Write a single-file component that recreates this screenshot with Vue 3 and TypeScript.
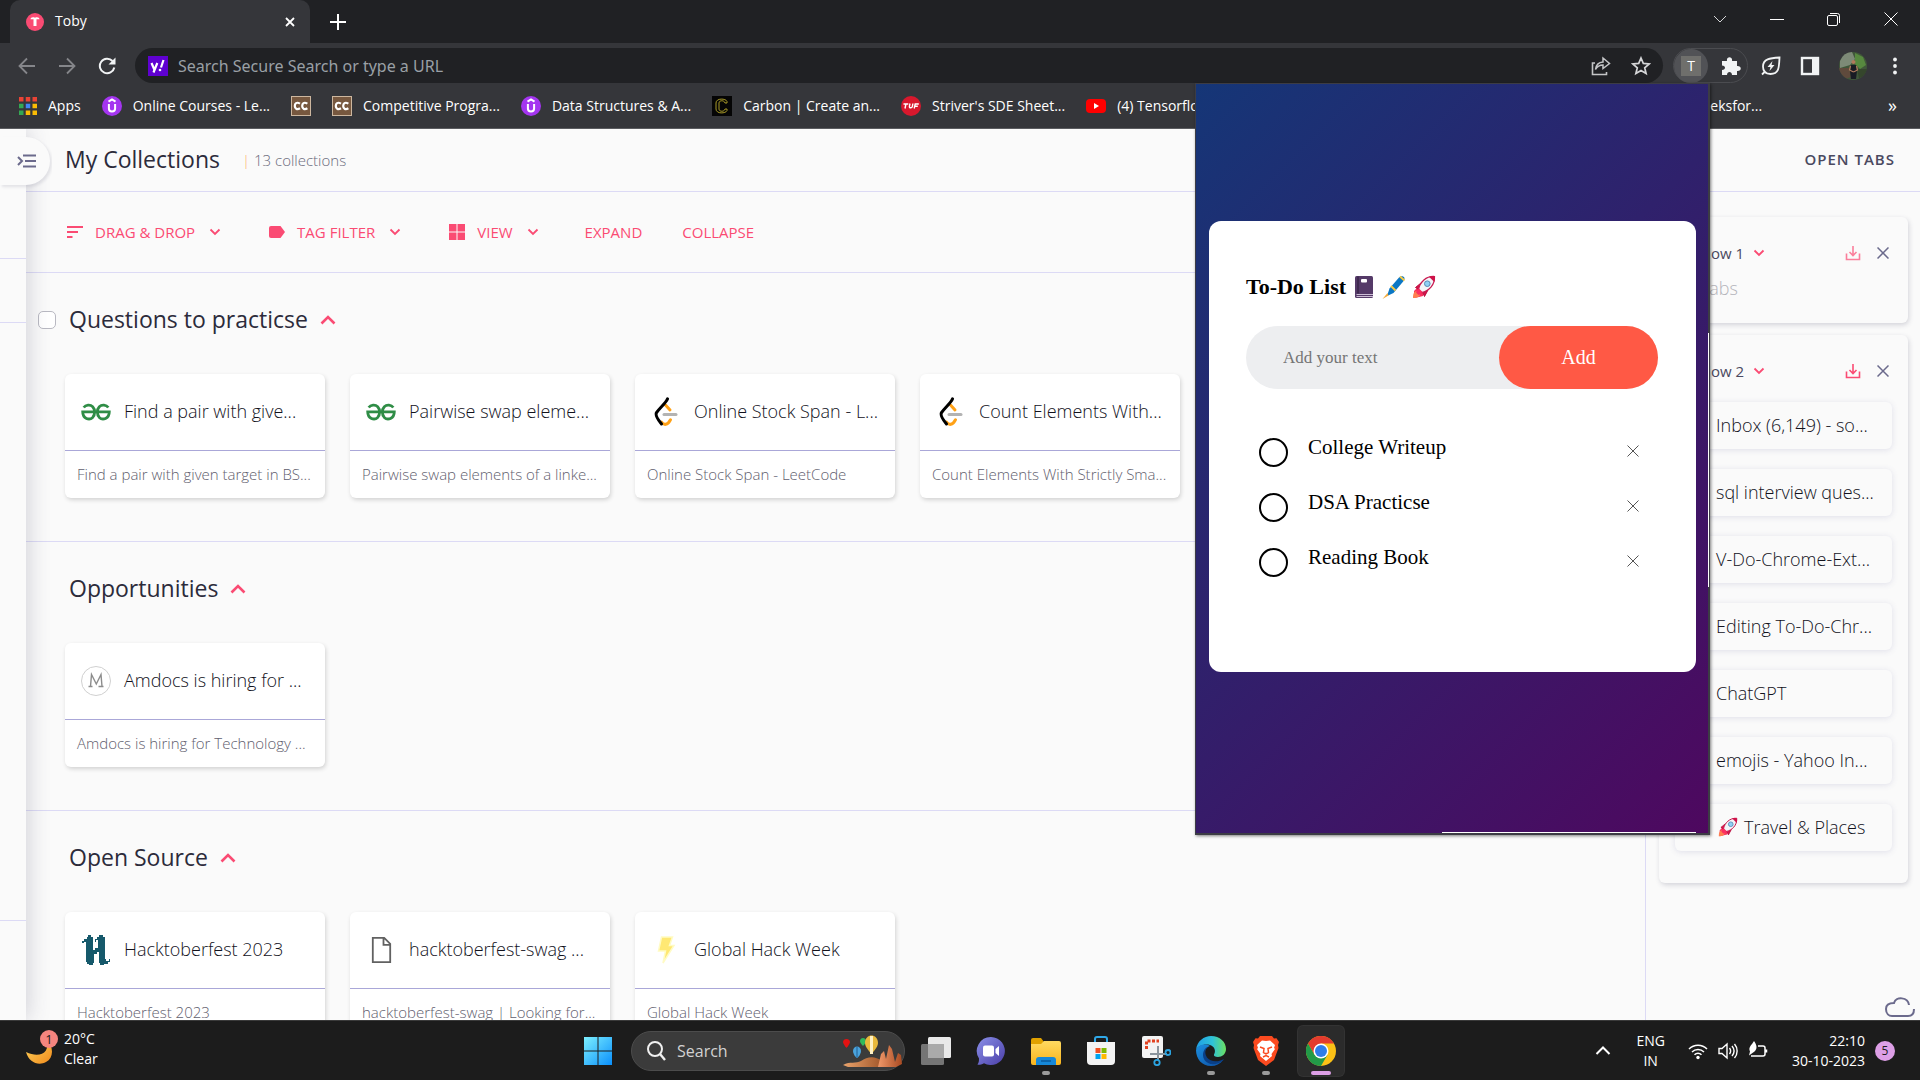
<script setup lang="ts">
import { ref } from 'vue'

interface Bookmark { icon: string; label: string }
interface Card { icon: string; title: string; note: string }
interface Collection { name: string; selectable: boolean; cards: Card[] }
interface Todo { text: string; done: boolean }

const bookmarks: Bookmark[] = [
  { icon: 'i-apps', label: 'Apps' },
  { icon: 'i-udemy', label: 'Online Courses - Le...' },
  { icon: 'i-cc', label: '' },
  { icon: 'i-cc', label: 'Competitive Progra...' },
  { icon: 'i-udemy', label: 'Data Structures & A...' },
  { icon: 'i-carbon', label: 'Carbon | Create an...' },
  { icon: 'i-tuf', label: "Striver's SDE Sheet..." },
  { icon: 'i-youtube', label: '(4) Tensorflow' },
]

const collections: Collection[] = [
  {
    name: 'Questions to practicse',
    selectable: true,
    cards: [
      { icon: 'i-gfg', title: 'Find a pair with give...', note: 'Find a pair with given target in BS...' },
      { icon: 'i-gfg', title: 'Pairwise swap eleme...', note: 'Pairwise swap elements of a linke...' },
      { icon: 'i-leetcode', title: 'Online Stock Span - L...', note: 'Online Stock Span - LeetCode' },
      { icon: 'i-leetcode', title: 'Count Elements With...', note: 'Count Elements With Strictly Sma...' },
    ],
  },
  {
    name: 'Opportunities',
    selectable: false,
    cards: [{ icon: 'i-medium', title: 'Amdocs is hiring for ...', note: 'Amdocs is hiring for Technology ...' }],
  },
  {
    name: 'Open Source',
    selectable: false,
    cards: [
      { icon: 'i-hack', title: 'Hacktoberfest 2023', note: 'Hacktoberfest 2023' },
      { icon: 'i-file', title: 'hacktoberfest-swag ...', note: 'hacktoberfest-swag | Looking for...' },
      { icon: 'i-bolt', title: 'Global Hack Week', note: 'Global Hack Week' },
    ],
  },
]

const openTabs = [
  'Inbox (6,149) - so...',
  'sql interview ques...',
  'V-Do-Chrome-Ext...',
  'Editing To-Do-Chr...',
  'ChatGPT',
  'emojis - Yahoo In...',
]

const todos = ref<Todo[]>([
  { text: 'College Writeup', done: false },
  { text: 'DSA Practicse', done: false },
  { text: 'Reading Book', done: false },
])
const draft = ref('')

function addTodo() {
  const text = draft.value.trim()
  if (text) todos.value.push({ text, done: false })
  draft.value = ''
}
function removeTodo(index: number) {
  todos.value.splice(index, 1)
}

const pinned = [
  { icon: 'i-taskview', name: 'Task view', state: '' },
  { icon: 'i-chat', name: 'Chat', state: '' },
  { icon: 'i-explorer', name: 'File Explorer', state: 'open' },
  { icon: 'i-store', name: 'Store', state: '' },
  { icon: 'i-snip', name: 'Snipping Tool', state: '' },
  { icon: 'i-edge', name: 'Edge', state: 'open' },
  { icon: 'i-brave', name: 'Brave', state: 'open' },
  { icon: 'i-chrome', name: 'Chrome', state: 'active' },
]
</script>

<template>
  <div class="desktop">
    <svg class="sprite" width="0" height="0" aria-hidden="true">
      <defs>
        <linearGradient id="g-win" x1="0" y1="0" x2="1" y2="1"><stop offset="0" stop-color="#7df0ff" /><stop offset="1" stop-color="#0a8ffb" /></linearGradient>
        <linearGradient id="g-chat" x1="0" y1="0" x2="1" y2="1"><stop offset="0" stop-color="#8a8fe8" /><stop offset="1" stop-color="#4b3fa8" /></linearGradient>
        <linearGradient id="g-folder" x1="0" y1="0" x2="0" y2="1"><stop offset="0" stop-color="#ffda61" /><stop offset="1" stop-color="#f9b41c" /></linearGradient>
        <linearGradient id="g-edge1" x1="0" y1="0" x2="1" y2="0"><stop offset="0" stop-color="#1f9fe6" /><stop offset="0.55" stop-color="#2fc2d8" /><stop offset="1" stop-color="#6be060" /></linearGradient>
        <linearGradient id="g-edge2" x1="0" y1="0" x2="1" y2="1"><stop offset="0" stop-color="#1c8fe0" /><stop offset="1" stop-color="#0c4ea3" /></linearGradient>
        <linearGradient id="g-moon" x1="0" y1="0" x2="1" y2="1"><stop offset="0" stop-color="#ffd75e" /><stop offset="1" stop-color="#f08a1c" /></linearGradient>
        <linearGradient id="g-sand" x1="0" y1="0" x2="1" y2="0"><stop offset="0" stop-color="#e9a36c" /><stop offset="1" stop-color="#9a4f24" /></linearGradient>
        <linearGradient id="g-rock" x1="0" y1="0" x2="1" y2="0"><stop offset="0" stop-color="#f0996a" /><stop offset="1" stop-color="#a84a22" /></linearGradient>
      </defs>

      <symbol id="i-toby" viewBox="0 0 18 18">
        <circle cx="9" cy="9" r="9" fill="#fa4b73" />
        <path d="M4.500 6.300c0-2 2.400-2.600 4.500-1.600 2.100-1 4.500-.4 4.500 1.600H10.500V13h-3V6.300z" fill="#fff" />
      </symbol>
      <symbol id="i-apps" viewBox="0 0 16 16">
        <path d="M0 0h4v4H0zM6 0h4v4H6zM12 0h4v4h-4z" fill="#ea4335" />
        <path d="M0 6h4v4H0zM0 12h4v4H0z" fill="#34a853" />
        <path d="M6 6h4v4H6z" fill="#4285f4" />
        <path d="M12 6h4v4h-4zM6 12h4v4H6zM12 12h4v4h-4z" fill="#fbbc04" />
      </symbol>
      <symbol id="i-udemy" viewBox="0 0 20 20">
        <circle cx="10" cy="10" r="10" fill="#a435f0" />
        <path d="M6.500 5.600 10 3.400l3.500 2.200M6.900 8v4.600c0 3.900 6.200 3.900 6.200 0V8" fill="none" stroke="#fff" stroke-width="2" />
      </symbol>
      <symbol id="i-cc" viewBox="0 0 20 20">
        <rect x=".5" y=".5" width="19" height="19" fill="#77583f" stroke="#cdb79f" />
        <path d="M9 7.600c-3.500-2-5.200 0-5.200 2.400s2 4.200 5.200 2.300M16.400 7.600c-3.500-2-5.200 0-5.200 2.400s2 4.200 5.200 2.300" fill="none" stroke="#fff" stroke-width="2.200" />
      </symbol>
      <symbol id="i-carbon" viewBox="0 0 20 20">
        <rect width="20" height="20" fill="#050505" />
        <path d="M15 7V5.500C14 2.300 4 1.800 4 7v6c0 5.200 10 4.700 11 1.500V13h-2c-.5 3-6 3-6 0V7c0-3 5.500-3 6 0z" fill="none" stroke="#a89a28" />
      </symbol>
      <symbol id="i-tuf" viewBox="0 0 20 20">
        <circle cx="10" cy="10" r="10" fill="#d8182d" />
        <path d="M2.500 8h4.800M4.900 8l-.9 4.500M9 7.500l-.6 2.800c-.3 2 2.600 2 3 0l.5-2.800M13.200 12.500l1-4.500h3.600M13.800 10.200h3" fill="none" stroke="#fff" stroke-width="1.400" />
      </symbol>
      <symbol id="i-youtube" viewBox="0 0 20 20">
        <rect y="3" width="20" height="14" rx="4" fill="#f00" /><path d="M8 7v6l5-3z" fill="#fff" />
      </symbol>

      <symbol id="i-gfg" viewBox="0 0 30 30">
        <path d="M27.300 10.500c-2-2.700-6.500-3.200-9-.8-2.600 2.700-2.600 8 0 10.700 3.400 3.300 10 1.300 10-5.600H1.700c0 6.900 6.600 8.900 10 5.600 2.600-2.700 2.600-8 0-10.700-2.500-2.400-7-1.900-9 .8" fill="none" stroke="#2f8d46" stroke-width="2.800" />
      </symbol>
      <symbol id="i-leetcode" viewBox="0 0 30 30">
        <path d="m14.500 8 4.500 5M10.500 25c2.500 3.600 6 3.300 9-2.300" fill="none" stroke="#ffa116" stroke-width="3" stroke-linecap="round" />
        <path d="M16.500 1.800C14.500 6.500 8 11.500 5.500 15.600c-2 3.400 3.500 9.400 5 11.400" fill="none" stroke="#000" stroke-width="3" stroke-linecap="round" />
        <path d="M13 17.500h12" stroke="#b3b3b3" stroke-width="3" stroke-linecap="round" />
      </symbol>
      <symbol id="i-medium" viewBox="0 0 30 30">
        <circle cx="15" cy="15" r="14.500" fill="#fff" stroke="#d0d0d0" />
        <path d="M7.500 20.500h4M17.500 20.500h5M9.500 20.500l1-12 4.800 9.500 4.700-9.500 1 12" fill="none" stroke="#8c8c8c" stroke-width="1.400" />
      </symbol>
      <symbol id="i-hack" viewBox="0 0 30 30">
        <path d="M1 6h2V4h3V2h1V0h3v2h2v13h2v-2h3V5h-2v2h-1V4h2V2h2V0h4v2h2v22h1v2h3v-2h1v3h-2v2h-4v1h-4v-2h-1V17h-2v2h-3v9h-1v2H8v-1H6v-2H5V7H3v1H1z" fill="#16596b" />
      </symbol>
      <symbol id="i-file" viewBox="0 0 30 30">
        <path d="M6.800 2.800h11.400l6 6v18.400H6.800zM17.500 2.800v7h6.700" fill="none" stroke="#616161" stroke-width="1.800" />
      </symbol>
      <symbol id="i-bolt" viewBox="0 0 30 30">
        <path d="M10.500 2h11l-3 8.500h4.500L12 28l2.500-12H7.500z" fill="#ffe873" stroke="#fffbc4" stroke-width="1.500" />
      </symbol>

      <symbol id="i-down" viewBox="0 0 12 12"><path d="m1.500 3.500 4.500 4.500 4.500-4.500" fill="none" stroke="currentColor" stroke-width="1.800" /></symbol>
      <symbol id="i-up" viewBox="0 0 16 16"><path d="m1.500 11.500 6.500-6.500 6.500 6.500" fill="none" stroke="currentColor" stroke-width="2.600" /></symbol>
      <symbol id="i-cross" viewBox="0 0 12 12"><path d="m.5.500 11 11m0-11-11 11" fill="none" stroke="currentColor" stroke-width="1.500" /></symbol>
      <symbol id="i-save" viewBox="0 0 16 16"><path d="M1.500 8.500v6h13v-6M8 1v9.500M4.500 7 8 10.500 11.500 7" fill="none" stroke="currentColor" stroke-width="1.600" /></symbol>

      <symbol id="i-rocket" viewBox="0 0 24 24">
        <path d="M2 16l5-5 3 1 2 3-1 6-4 1-5 1z" fill="#f8305f" />
        <path d="M4 16c-3 1.500-3 5-3 7 2 0 5.500 0 7-3z" fill="#ff7f50" />
        <path d="M9 8 3.500 12.500 6 14M16 15l-3.500 6.500L11 18z" fill="#d8124a" stroke="#b8103f" />
        <path d="M22.500 1.500C14 1 8 7 6.500 14.500l3 3C17 16 23 10 22.500 1.500z" fill="#f3f4f8" stroke="#c8194f" stroke-width="1.200" />
        <path d="M17 1.700c2-.6 4-.6 5.500-.2.400 1.500.4 3.500-.2 5.500z" fill="#cf1249" />
        <circle cx="15.300" cy="8.700" r="2.800" fill="#8fd0f5" stroke="#5689b5" />
        <path d="m7 13.500 3.500 3.500-4 3-2.500-2.500z" fill="#fb2f61" />
      </symbol>
      <symbol id="i-book" viewBox="0 0 24 24">
        <rect x="3" y="1" width="18" height="22" rx="1.500" fill="#553a68" /><path d="M6 1.500v17" stroke="#3a2648" stroke-width="1.500" />
        <path d="M4.500 19.500H21M4.500 21.500H21" stroke="#cdbfd6" stroke-width="1" /><rect x="9" y="4" width="6" height="3.500" rx="1" fill="#fff" />
      </symbol>
      <symbol id="i-pen" viewBox="0 0 24 24">
        <path d="M17 2.500c2.500-2.500 7-1 5 3L11.500 18l-6.500 3L7.500 13.500z" fill="#0b77c4" />
        <path d="m9 11 4.500 4.500M18 1.500l4.500 4" stroke="#f6c945" stroke-width="2" /><path d="m5.500 18-5 6 6-3.500z" fill="#f2a93b" />
      </symbol>

      <symbol id="i-taskview" viewBox="0 0 30 30"><rect x="7" y="1" width="23" height="21" rx="1.500" fill="#e9e9e9" /><rect x="0" y="8" width="23" height="21" rx="1.500" fill="#757575" /><path d="M7 8h16v14H7z" fill="#aaa" /></symbol>
      <symbol id="i-chat" viewBox="0 0 30 30"><path d="M15 1a14 14 0 1 1-7 26.200C5 29 2 29 1.500 28.500 3 26.500 3 24.500 3 22.500A14 14 0 0 1 15 1z" fill="url(#g-chat)" /><rect x="7" y="9.500" width="11" height="11" rx="2" fill="#fff" /><path d="m19.500 13 3.500-3v10l-3.500-3z" fill="#fff" /></symbol>
      <symbol id="i-explorer" viewBox="0 0 30 30"><path d="M0 4a2 2 0 0 1 2-2h8l3 4v6H0z" fill="#e0a100" /><path d="M0 8h10l3-3h15a2 2 0 0 1 2 2v20a2 2 0 0 1-2 2H2a2 2 0 0 1-2-2z" fill="url(#g-folder)" /><path d="M5 29v-5a3 3 0 0 1 3-3h14a3 3 0 0 1 3 3v5z" fill="#1688d8" /><path d="M10 25h10" stroke="#0a5a9c" stroke-width="1.500" /></symbol>
      <symbol id="i-store" viewBox="0 0 30 30"><path d="M9 7V3a2 2 0 0 1 2-2h8a2 2 0 0 1 2 2v4" fill="none" stroke="#2fa8e8" stroke-width="2" /><path d="M1 6h28v19a4 4 0 0 1-4 4H5a4 4 0 0 1-4-4z" fill="#f3f3f3" /><path d="M9.500 12h5v5h-5z" fill="#f25022" /><path d="M15.500 12h5v5h-5z" fill="#7fba00" /><path d="M9.500 18h5v5h-5z" fill="#00a4ef" /><path d="M15.500 18h5v5h-5z" fill="#ffb900" /></symbol>
      <symbol id="i-snip" viewBox="0 0 30 30"><rect x="1" y="0" width="21" height="22" rx="2" fill="#f3f3f3" /><path d="M5.500 13V5H18" fill="none" stroke="#e2401f" stroke-width="3" stroke-dasharray="3 1.500" /><path d="M17 10v14M9 18h17" stroke="#8b959d" stroke-width="2" /><circle cx="16" cy="26.500" r="2.700" fill="none" stroke="#2ba3e0" stroke-width="1.800" /><circle cx="27" cy="16.500" r="2.500" fill="none" stroke="#2ba3e0" stroke-width="1.800" /></symbol>
      <symbol id="i-edge" viewBox="0 0 30 30"><path d="M0 14C1 5 8 0 15 0c9 0 15 6 15 13 0 5-4 8-8 8-3 0-4.500-1-4-2.500 2-3 1-8-4-9.500C8 7.500 2 10 0 14z" fill="url(#g-edge1)" /><path d="M0 14C2 9 9 7 14 10c-5 1-7 8-4 13 3 4 10 5 17 1-3 4-7 6-12 6C6 30 0 23 0 14z" fill="url(#g-edge2)" /><path d="M14 10c-5 1-6 7-3 11.500 3 4 10 5.500 17 1.500l-1 1.500C20 30 12 29 8.500 24 5 18 8 11 14 10z" fill="#0a3f86" /></symbol>
      <symbol id="i-brave" viewBox="0 0 30 30"><path d="m9 0h12l2 2.500 2.500-.3L28 6l-1 3 .5 3L23 24l-8 6-8-6L2.500 12 3 9 2 6l2.500-3.800 2.500.3z" fill="#fb4a1f" /><path d="m15 5 4-.5L24 9l-1 3 1 1-3.500 5 .5 2-6 5-6-5 .5-2L6 13l1-1-1-3 5-4.500z" fill="#fff" /><path d="m9 11 4 1.500-.5 4L15 18l2.500-1.500-.5-4L21 11M12 21l3-1.500 3 1.500" fill="none" stroke="#fb4a1f" stroke-width="1.500" /></symbol>
      <symbol id="i-chrome" viewBox="0 0 30 30"><circle cx="15" cy="15" r="15" fill="#fbc116" /><path d="M2 7.500a15 15 0 0 1 26 0H15L8.500 18.700z" fill="#e33b2e" /><path d="M2 7.500A15 15 0 0 0 15 30l6.500-11.200H8.500z" fill="#229a48" /><circle cx="15" cy="15" r="7.500" fill="#fff" /><circle cx="15" cy="15" r="6" fill="#2f7de9" /></symbol>
    </svg>

    <header class="browser">
      <div class="tabstrip">
        <div class="tab">
          <svg class="s18"><use href="#i-toby" /></svg>
          <span class="tab-name">Toby</span>
          <button class="plain" aria-label="Close tab"><svg class="s10"><path d="m1 1 8 8m0-8-8 8" fill="none" stroke="#fff" stroke-width="1.800" /></svg></button>
        </div>
        <button class="plain new-tab" aria-label="New tab"><svg class="s16"><path d="M8 0v16M0 8h16" stroke="#fff" stroke-width="2" /></svg></button>
        <div class="window-buttons">
          <button class="plain" aria-label="Search tabs"><svg class="s14"><path d="m1 4 6 6 6-6" fill="none" stroke="#d5d6d8" /></svg></button>
          <button class="plain" aria-label="Minimise"><svg class="s14"><path d="M0 7.500h14" stroke="#fff" /></svg></button>
          <button class="plain" aria-label="Restore"><svg class="s14"><path d="M3 1.500h7.500a2 2 0 0 1 2 2V11" fill="none" stroke="#fff" /><rect x=".5" y="3.500" width="10" height="10" rx="1.500" fill="none" stroke="#fff" /></svg></button>
          <button class="plain" aria-label="Close"><svg class="s14"><path d="m.5.500 13 13m0-13-13 13" stroke="#fff" /></svg></button>
        </div>
      </div>

      <div class="toolbar">
        <div class="nav">
          <button class="plain" aria-label="Back"><svg class="s18"><path d="M17 9H2M9 1.500 1.500 9 9 16.500" fill="none" stroke="#85868a" stroke-width="1.800" /></svg></button>
          <button class="plain" aria-label="Forward"><svg class="s18"><path d="M1 9h15M9 1.500 16.500 9 9 16.500" fill="none" stroke="#85868a" stroke-width="1.800" /></svg></button>
          <button class="plain" aria-label="Reload"><svg class="s18"><path d="M14.500 4A7.300 7.300 0 1 0 16.300 10.500" fill="none" stroke="#f1f3f4" stroke-width="2" /><path d="M17.500.500v7h-7z" fill="#f1f3f4" /></svg></button>
        </div>
        <div class="omnibox">
          <svg class="s20" aria-hidden="true"><rect width="20" height="20" fill="#5f01d1" /><path d="m3.500 7 2.800 6.500M9.300 7 5.500 16.500M13 11.500 15.500 4" fill="none" stroke="#fff" stroke-width="2.200" /><circle cx="12" cy="14" r="1.300" fill="#fff" /></svg>
          <input type="text" aria-label="Address" placeholder="Search Secure Search or type a URL" />
          <button class="plain" aria-label="Share"><svg class="s20"><path d="M4 7H1.500v11.500h14V16" fill="none" stroke="#c4c5c7" stroke-width="1.600" /><path d="M12 6V2l6.500 5.500-6.500 5V9c-3 0-5.500 1-7.500 4.500C5 9 8 6.300 12 6z" fill="none" stroke="#c4c5c7" stroke-width="1.500" /></svg></button>
          <button class="plain" aria-label="Bookmark this page"><svg class="s20"><path d="m10 2 2.300 5.400 5.900.5-4.500 3.900 1.400 5.700-5.100-3-5.100 3 1.400-5.700-4.500-3.900 5.900-.5z" fill="none" stroke="#d5d6d8" stroke-width="1.700" /></svg></button>
        </div>
        <div class="extensions">
          <button class="plain ext-active" aria-label="To-Do extension"><span>T</span></button>
          <button class="plain" aria-label="Extensions"><svg class="s20"><path d="M1 5h5c-1-5 6-5 5 0h5v5c5-.5 5 5.500 0 5v4h-5c0-4-5-4-5 0H1v-5c4 0 4-4.500 0-4.500z" fill="#f1f3f4" /></svg></button>
        </div>
        <div class="tools">
          <button class="plain" aria-label="Energy saver"><svg class="s20"><path d="M18.500 1.500C18 12 18 18 9.500 18 4 18 2 15 2 10.500 2 3 9 2 18.500 1.500zM4.500 15 1 18.500" fill="none" stroke="#f1f3f4" stroke-width="1.800" /><path d="M11.500 5 6.500 11h3L8.500 15l5-6h-3z" fill="#f1f3f4" /></svg></button>
          <button class="plain" aria-label="Side panel"><svg class="s20"><rect x="2" y="2" width="16" height="16" fill="none" stroke="#f1f3f4" stroke-width="2.400" /><path d="M12 2h6v16h-6z" fill="#f1f3f4" /></svg></button>
          <button class="plain" aria-label="Profile"><svg class="s28"><circle cx="14" cy="14" r="14" fill="#40573a" /><path d="M1 9a14 14 0 0 1 12-9l3 7-5 6-10 3z" fill="#7d8a77" /><path d="M16 1l8 4 3 8-6 4-5-5z" fill="#57893f" /><path d="M0 16h10l2 9-4 1.500A14 14 0 0 1 0 16z" fill="#5f4a3c" /><path d="M18 17h10a14 14 0 0 1-8 9.500z" fill="#35462c" /><circle cx="14.500" cy="10" r="2" fill="#b07a5c" /><path d="M12 13h5l1 6-1 8h-5l-1-8z" fill="#191b24" /><path d="m11.500 14-1 4 4 2M17.500 14l1 4-4 2" fill="none" stroke="#b07a5c" stroke-width="1.200" /></svg></button>
          <button class="plain" aria-label="Menu"><svg class="s18"><circle cx="9" cy="2.500" r="1.900" fill="#f1f3f4" /><circle cx="9" cy="9" r="1.900" fill="#f1f3f4" /><circle cx="9" cy="15.500" r="1.900" fill="#f1f3f4" /></svg></button>
        </div>
      </div>

      <nav class="bookmarks" aria-label="Bookmarks">
        <a v-for="(b, i) in bookmarks" :key="i" href="#" class="bookmark" :aria-label="b.label || 'CC'">
          <svg :class="b.icon === 'i-apps' ? 's18' : 's20'"><use :href="'#' + b.icon" /></svg>
          <span v-if="b.label">{{ b.label }}</span>
        </a>
        <a href="#" class="bookmark last"><span>Geeksfor...</span></a>
        <button class="plain more" aria-label="More bookmarks">»</button>
      </nav>
    </header>

    <main class="page">
      <aside class="rail">
        <button class="plain rail-toggle" aria-label="Expand sidebar">
          <svg width="20" height="14"><path d="m1 3 4 4-4 4M6 1.500h13M8 7h11M6 12.500h13" fill="none" stroke="#6b6a8c" stroke-width="2" /></svg>
        </button>
        <div class="rail-a"></div>
        <div class="rail-b"></div>
        <div class="rail-c"></div>
      </aside>

      <section class="content">
        <div class="content-head">
          <h1>My Collections</h1>
          <p><span class="bar">|</span> 13 collections</p>
        </div>
        <div class="actions">
          <button class="plain menu"><svg class="s16"><path d="M0 3h16M0 8h11M0 13h5.500" stroke="currentColor" stroke-width="2" /></svg><span>DRAG &amp; DROP</span><svg class="s12"><use href="#i-down" /></svg></button>
          <button class="plain menu"><svg class="s16"><path d="M0 4a2 2 0 0 1 2-2h9.500L16 8l-4.500 6H2a2 2 0 0 1-2-2z" fill="currentColor" /></svg><span>TAG FILTER</span><svg class="s12"><use href="#i-down" /></svg></button>
          <button class="plain menu"><svg class="s16"><path d="M0 0h7.500v7.500H0zM8.500 0H16v7.500H8.500zM0 8.500h7.500V16H0zM8.500 8.500H16V16H8.500z" fill="currentColor" /></svg><span>VIEW</span><svg class="s12"><use href="#i-down" /></svg></button>
          <button class="plain">EXPAND</button>
          <button class="plain">COLLAPSE</button>
        </div>

        <section v-for="c in collections" :key="c.name" class="collection">
          <div class="collection-head">
            <input v-if="c.selectable" type="checkbox" :aria-label="'Select ' + c.name" />
            <h2>{{ c.name }}</h2>
            <button class="plain pink" :aria-label="'Collapse ' + c.name"><svg class="s16"><use href="#i-up" /></svg></button>
          </div>
          <div class="cards">
            <a v-for="card in c.cards" :key="card.title" href="#" class="card">
              <span class="card-title"><svg class="s30"><use :href="'#' + card.icon" /></svg><span>{{ card.title }}</span></span>
              <span class="card-note">{{ card.note }}</span>
            </a>
          </div>
        </section>
      </section>

      <aside class="panel">
        <div class="panel-head">OPEN TABS</div>
        <div class="windows">
          <section class="window">
            <div class="window-head">
              <span>Window 1</span><svg class="s12 pink"><use href="#i-down" /></svg>
              <button class="plain pink faded save" aria-label="Save window 1"><svg class="s16"><use href="#i-save" /></svg></button>
              <button class="plain grey" aria-label="Close window 1"><svg class="s12"><use href="#i-cross" /></svg></button>
            </div>
            <p class="no-tabs">No tabs</p>
          </section>
          <section class="window">
            <div class="window-head">
              <span>Window 2</span><svg class="s12 pink"><use href="#i-down" /></svg>
              <button class="plain pink save" aria-label="Save window 2"><svg class="s16"><use href="#i-save" /></svg></button>
              <button class="plain grey" aria-label="Close window 2"><svg class="s12"><use href="#i-cross" /></svg></button>
            </div>
            <div class="tab-list">
              <a v-for="t in openTabs" :key="t" href="#">{{ t }}</a>
              <a href="#" class="with-icon"><svg class="s20"><use href="#i-rocket" /></svg>Travel &amp; Places</a>
            </div>
          </section>
        </div>
        <svg class="cloud" width="30" height="22"><path d="M24 9C23 1 11 0 9 7 3 7 1 10 1 13c0 5 3 7 6 7h16c4 0 6-3 6-7" fill="none" stroke="#6b6a8c" stroke-width="2" /></svg>
      </aside>
    </main>

    <div class="popup">
      <form class="todo" @submit.prevent="addTodo">
        <h3>To-Do List <svg class="s24"><use href="#i-book" /></svg><svg class="s24"><use href="#i-pen" /></svg><svg class="s24"><use href="#i-rocket" /></svg></h3>
        <div class="entry">
          <input v-model="draft" type="text" aria-label="New task" placeholder="Add your text" />
          <button type="submit">Add</button>
        </div>
        <ul>
          <li v-for="(t, i) in todos" :key="t.text">
            <label><input v-model="t.done" type="checkbox" /><span>{{ t.text }}</span></label>
            <button type="button" class="plain" :aria-label="'Remove ' + t.text" @click="removeTodo(i)"><svg class="s12"><path d="m.5.500 11 11m0-11-11 11" stroke="#555" /></svg></button>
          </li>
        </ul>
      </form>
      <span class="scroll-y"></span>
      <span class="scroll-x"></span>
    </div>

    <footer class="taskbar">
      <div class="weather">
        <svg width="36" height="38"><path d="M22 10c5 12-6 19-20 12 3 11 13 14 20 10 8-4 8-16 0-22z" fill="url(#g-moon)" /><circle cx="25" cy="9" r="9" fill="#f5857f" /><text x="25" y="14" text-anchor="middle" font-size="13" fill="#1c1c1c">1</text></svg>
        <div>20°C<br />Clear</div>
      </div>
      <div class="dock">
        <button class="plain" aria-label="Start"><svg class="s30"><path d="M1 1h13.500v13.500H1zM15.500 1H29v13.500H15.500zM1 15.500h13.500V29H1zM15.500 15.500H29V29H15.500z" fill="url(#g-win)" /></svg></button>
        <div class="search">
          <svg class="s20"><circle cx="9" cy="8" r="7" fill="none" stroke="#f0f0f0" stroke-width="2" /><path d="m14 13 5 6" stroke="#f0f0f0" stroke-width="2.400" /></svg>
          <input type="search" aria-label="Search Windows" placeholder="Search" />
          <svg width="60" height="34" aria-hidden="true">
            <path d="M1 31c7-4 13-1 18-4 6-4 13-6 21 0l4 6H6z" fill="url(#g-sand)" />
            <path d="m36 33 3-13 3-3 2 8 3-14 3 4 3 13 3-9 3 2 1 9-6 3z" fill="url(#g-rock)" />
            <path d="M1 8c0-4 7-4 7 0 0 2-3.500 6-3.500 6S1 10 1 8z" fill="#e31212" />
            <path d="M18 7c0-4 6-4 6 0 0 2-3 5-3 5s-3-3-3-5z" fill="#2fb95c" />
            <path d="M11 17c0-6 8-6 8 0 0 3-3 7-4 7s-4-4-4-7z" fill="#4aa3dc" /><path d="M15 12.500v11" stroke="#1f5f96" />
            <path d="M23 9c0-10 13-10 13 0 0 4-5 9-6.500 11C28 18 23 13 23 9z" fill="#e8b93c" /><path d="M29.500 2v18" stroke="#fff1c4" stroke-width="3" />
          </svg>
        </div>
        <button v-for="p in pinned" :key="p.name" class="plain pin" :class="p.state" :aria-label="p.name"><svg class="s30"><use :href="'#' + p.icon" /></svg></button>
      </div>
      <div class="tray">
        <svg class="s16"><path d="m1.500 11 6.500-6.500 6.500 6.500" fill="none" stroke="#fff" stroke-width="2" /></svg>
        <div class="lang">ENG<br />IN</div>
        <div class="status">
          <svg class="s20"><path d="M1 8a12.500 12.500 0 0 1 18 0M4 11a8.500 8.500 0 0 1 12 0M6.500 13.800a5 5 0 0 1 7 0" fill="none" stroke="#fff" stroke-width="1.500" /><circle cx="10" cy="16.500" r="1.700" fill="#fff" /></svg>
          <svg class="s20"><path d="M1 7.500h3L9 3v14l-5-4.500H1zM11.500 7c1.500 2 1.500 4 0 6M14 5c2.500 3 2.500 7 0 10M16.500 3c3.500 4 3.500 10 0 14" fill="none" stroke="#fff" stroke-width="1.400" /></svg>
          <svg class="s20"><path d="M10 5h5a2 2 0 0 1 2 2v6a2 2 0 0 1-2 2H3M18.500 8.500v3" fill="none" stroke="#fff" stroke-width="1.500" /><path d="M6 0c3 4 3.500 8 .5 10.500L1 14.500l1-4C0 6 3.500 4.500 6 0z" fill="#fff" /></svg>
        </div>
        <div class="clock">22:10<br />30-10-2023</div>
        <span class="count">5</span>
      </div>
    </footer>
  </div>
</template>

<style>
body { margin: 0; overflow: hidden; }
</style>

<style scoped>
* { box-sizing: border-box; }
.desktop {
  position: relative;
  display: flex;
  flex-direction: column;
  height: 100vh;
  overflow: hidden;
  font-family: 'Open Sans', 'Noto Sans', sans-serif;
  background: #fafafa;
}
.sprite { position: absolute; }
svg { flex: none; display: block; }
h1, h2, h3, p, ul { margin: 0; padding: 0; font-weight: 400; }
a { color: inherit; text-decoration: none; }
input { font: inherit; color: inherit; border: 0; outline: 0; background: none; min-width: 0; }
.plain { display: flex; align-items: center; justify-content: center; padding: 0; border: 0; background: none; font: inherit; color: inherit; }
.pink { color: #fa4b73; }
.grey { color: #6b6a8c; }
.faded { opacity: 0.7; }
.s10 { width: 10px; height: 10px; }
.s12 { width: 12px; height: 12px; }
.s14 { width: 14px; height: 14px; }
.s16 { width: 16px; height: 16px; }
.s18 { width: 18px; height: 18px; }
.s20 { width: 20px; height: 20px; }
.s24 { width: 24px; height: 24px; }
.s28 { width: 28px; height: 28px; }
.s30 { width: 30px; height: 30px; }

/* browser chrome */
.browser { flex: none; background: #35363a; color: #fff; border-bottom: 1px solid #5b5c60; }
.tabstrip { display: flex; align-items: center; height: 43px; padding-left: 10px; background: #202124; }
.tab { display: flex; align-items: center; width: 300px; height: 43px; padding: 0 15px 0 16px; border-radius: 10px 10px 0 0; background: #35363a; font-size: 14px; }
.tab-name { flex: 1; padding: 0 0 2px 11px; }
.new-tab { margin-left: 20px; }
.window-buttons { display: flex; gap: 43px; margin-left: auto; padding: 0 22px 6px 0; }
.toolbar { display: flex; align-items: center; height: 45px; }
.nav { display: flex; gap: 22px; padding: 0 19px 0 18px; }
.omnibox { display: flex; align-items: center; flex: 1; height: 35px; padding: 0 12px 0 13px; border-radius: 18px; background: #202124; font-family: 'Noto Sans', 'Open Sans', sans-serif; font-size: 16px; }
.omnibox input { flex: 1; padding: 0 10px; }
.omnibox input::placeholder { color: #9aa0a6; opacity: 1; }
.omnibox button + button { margin-left: 20px; }
.extensions { display: flex; align-items: center; width: 75px; height: 35px; margin-left: 10px; border: 1px solid #4b4c50; border-radius: 18px; gap: 13px; }
.ext-active { width: 34px; height: 34px; border-radius: 50%; background: #515256; }
.ext-active span { width: 20px; height: 20px; background: #6f6f6c; font-size: 14px; line-height: 20px; }
.tools { display: flex; align-items: center; gap: 19px; padding: 0 18px 0 13px; margin-right: -2px; }
.bookmarks { display: flex; align-items: center; gap: 21px; height: 40px; padding: 0 23px 4px 19px; font-size: 14px; white-space: nowrap; }
.bookmark { display: flex; align-items: center; gap: 11px; }
.bookmark span { padding-bottom: 1px; }
.last { margin-left: auto; }
.more { margin-left: 105px; padding-bottom: 2px; font-size: 18px; }

/* collections page */
.page { display: flex; flex: 1; min-height: 0; overflow: hidden; color: #2c2b3b; }
.rail { position: relative; z-index: 1; display: flex; flex-direction: column; width: 26px; background: #fafafa; box-shadow: 2px 0 22px rgba(60, 60, 90, 0.22); clip-path: inset(0 -26px 0 0); }
.rail-toggle { position: absolute; top: 8px; left: 0; width: 50px; height: 48px; padding-left: 3px; border-radius: 0 24px 24px 0; background: #fafafa; box-shadow: 2px 2px 3px rgba(60, 60, 90, 0.12); }
.rail-a { height: 130px; border-bottom: 1px solid #dcdaf5; }
.rail-b { height: 64px; border-bottom: 1px solid #dcdaf5; }
.rail-c { height: 598px; flex: none; border-bottom: 1px solid #dcdaf5; }
.content { flex: 1; min-width: 0; }
.content-head { display: flex; align-items: center; height: 63px; padding-left: 39px; border-bottom: 1px solid #dcdaf5; }
.content-head h1 { padding-bottom: 2px; font-size: 23px; }
.content-head p { margin-left: 22px; font-size: 15px; font-weight: 300; color: #6b6a7c; }
.bar { color: #fab36e; }
.actions { display: flex; align-items: center; gap: 40px; height: 81px; padding: 0 0 1px 41px; border-bottom: 1px solid #dcdaf5; font-size: 15px; color: #fa4b73; }
.actions .menu { margin-right: 8px; }
.actions span { padding: 0 14px 0 12px; }
.actions .menu:nth-child(3) { margin-right: 6px; }
.collection { padding: 24px 0 43px 39px; border-bottom: 1px solid #dcdaf5; }
.collection-head { position: relative; display: flex; align-items: center; height: 46px; margin-bottom: 31px; padding-left: 4px; }
.collection-head h2 { margin-right: 12px; padding-bottom: 2px; font-size: 23px; }
.collection-head input { position: absolute; left: -27px; width: 18px; height: 18px; margin: 0; appearance: none; border: 1px solid #b9b9c2; border-radius: 5px; background: #fff; }
.cards { display: flex; gap: 25px; }
.card { flex: none; width: 260px; height: 124px; border-radius: 6px; background: #fff; box-shadow: 1px 2px 4px rgba(0, 0, 0, 0.16); white-space: nowrap; }
.card-title { display: flex; align-items: center; gap: 13px; height: 77px; padding-left: 16px; border-bottom: 1px solid #aaa7d8; font-size: 18px; font-weight: 300; color: #12121c; }
.card-title span { padding-bottom: 2px; }
.card-note { display: flex; align-items: center; height: 47px; padding: 0 0 2px 12px; font-size: 15px; font-weight: 300; color: #5f5e6e; }

/* open tabs panel */
.panel { position: relative; width: 275px; border-left: 1px solid #dcdaf5; }
.panel-head { display: flex; align-items: center; justify-content: flex-end; height: 63px; padding: 0 25px 2px 0; border-bottom: 1px solid #dcdaf5; font-size: 15px; font-weight: 600; letter-spacing: 1px; color: #4a4960; }
.windows { display: flex; flex-direction: column; gap: 12px; padding: 25px 12px 0 13px; }
.window { padding: 18px 16px 0; border-radius: 6px; box-shadow: 1px 2px 5px rgba(60, 60, 90, 0.2); }
.window:first-child { height: 106px; }
.window-head { display: flex; align-items: center; height: 36px; padding-right: 3px; font-size: 15px; color: #4a4960; }
.window-head > span { width: 78px; white-space: nowrap; }
.save { margin: 0 16px 0 auto; }
.no-tabs { font-size: 18px; line-height: 34px; font-weight: 300; color: #b4b4ba; }
.tab-list { display: flex; flex-direction: column; gap: 20px; padding: 13px 0 32px; }
.tab-list a { display: flex; align-items: center; gap: 6px; height: 47px; padding: 0 0 2px 41px; border-radius: 6px; box-shadow: 0 1px 6px rgba(90, 90, 150, 0.16); font-size: 18px; font-weight: 300; white-space: nowrap; color: #12121c; }
.tab-list .with-icon { padding-left: 43px; }
.cloud { position: absolute; right: 5px; bottom: 2px; }

/* extension popup */
.popup { position: absolute; z-index: 2; top: 83px; right: 210px; width: 515px; height: 752px; padding: 137px 12px 0 13px; border: 1px solid #3c3c44; border-right-width: 2px; border-bottom-width: 2px; background: linear-gradient(135deg, #153677, #4e085f); box-shadow: 1px 1px 3px rgba(0, 0, 0, 0.5); font-family: 'Liberation Serif', serif; }
.todo { height: 451px; padding: 48px 38px 0 37px; border-radius: 12px; background: #fff; color: #000; }
.todo h3 { display: flex; align-items: center; gap: 6px; height: 36px; font-size: 22px; font-weight: 700; }
.entry { display: flex; height: 63px; margin: 21px 0 31px; border-radius: 32px; background: #edeef0; }
.entry input { flex: 1; padding: 0 37px; font-size: 17px; }
.entry input::placeholder { color: #757575; opacity: 1; }
.entry button { width: 159px; border: 0; border-radius: 32px; background: #ff5945; color: #fff; font: inherit; font-size: 20px; }
.todo ul { list-style: none; }
.todo li { display: flex; align-items: center; justify-content: space-between; height: 55px; padding: 6px 19px 0 13px; font-size: 21px; }
.todo label { display: flex; align-items: center; }
.todo label input { width: 29px; height: 29px; margin: 4px 0 0; appearance: none; border: 2px solid #000; border-radius: 50%; }
.todo label span { padding: 0 0 6px 20px; }
.scroll-y { position: absolute; right: -1px; top: 249px; width: 1px; height: 254px; background: #fff; }
.scroll-x { position: absolute; right: 12px; bottom: 0; width: 254px; height: 1px; background: #fff; }

/* taskbar */
.taskbar { display: grid; grid-template-columns: 1fr auto 1fr; align-items: center; flex: none; height: 60px; border-top: 1px solid #3a3a3a; background: #1c1c1c; color: #fff; font-size: 14px; line-height: 20px; }
.weather { display: flex; align-items: center; gap: 4px; padding: 0 0 3px 24px; }
.dock { display: flex; align-items: center; margin-left: 16px; }
.search { display: flex; align-items: center; width: 274px; height: 40px; margin: 0 8px 0 18px; padding: 0 2px 0 14px; border: 1px solid #4c4c4c; border-radius: 20px; background: #3b3b3b; font-size: 16px; }
.search input { flex: 1; padding: 0 11px; }
.search input::placeholder { color: #d2d2d2; opacity: 1; }
.pin { position: relative; width: 46px; height: 50px; margin-right: 9px; border-radius: 5px; }
.pin.open::after, .pin.active::after { content: ''; position: absolute; bottom: 1px; width: 8px; height: 4px; border-radius: 2px; background: #9a9a9a; }
.pin.active { background: #2b2b2b; box-shadow: 0 0 0 1px #333; }
.pin.active::after { width: 20px; background: #dd9fe6; }
.tray { display: flex; align-items: center; justify-content: flex-end; padding-right: 25px; }
.lang { margin: 0 23px 0 25px; text-align: center; }
.status { display: flex; gap: 10px; }
.clock { margin: 0 10px 0 24px; text-align: right; }
.count { width: 20px; height: 20px; border-radius: 50%; background: #dd9fe6; color: #1c1c1c; font-size: 12px; text-align: center; }
</style>
